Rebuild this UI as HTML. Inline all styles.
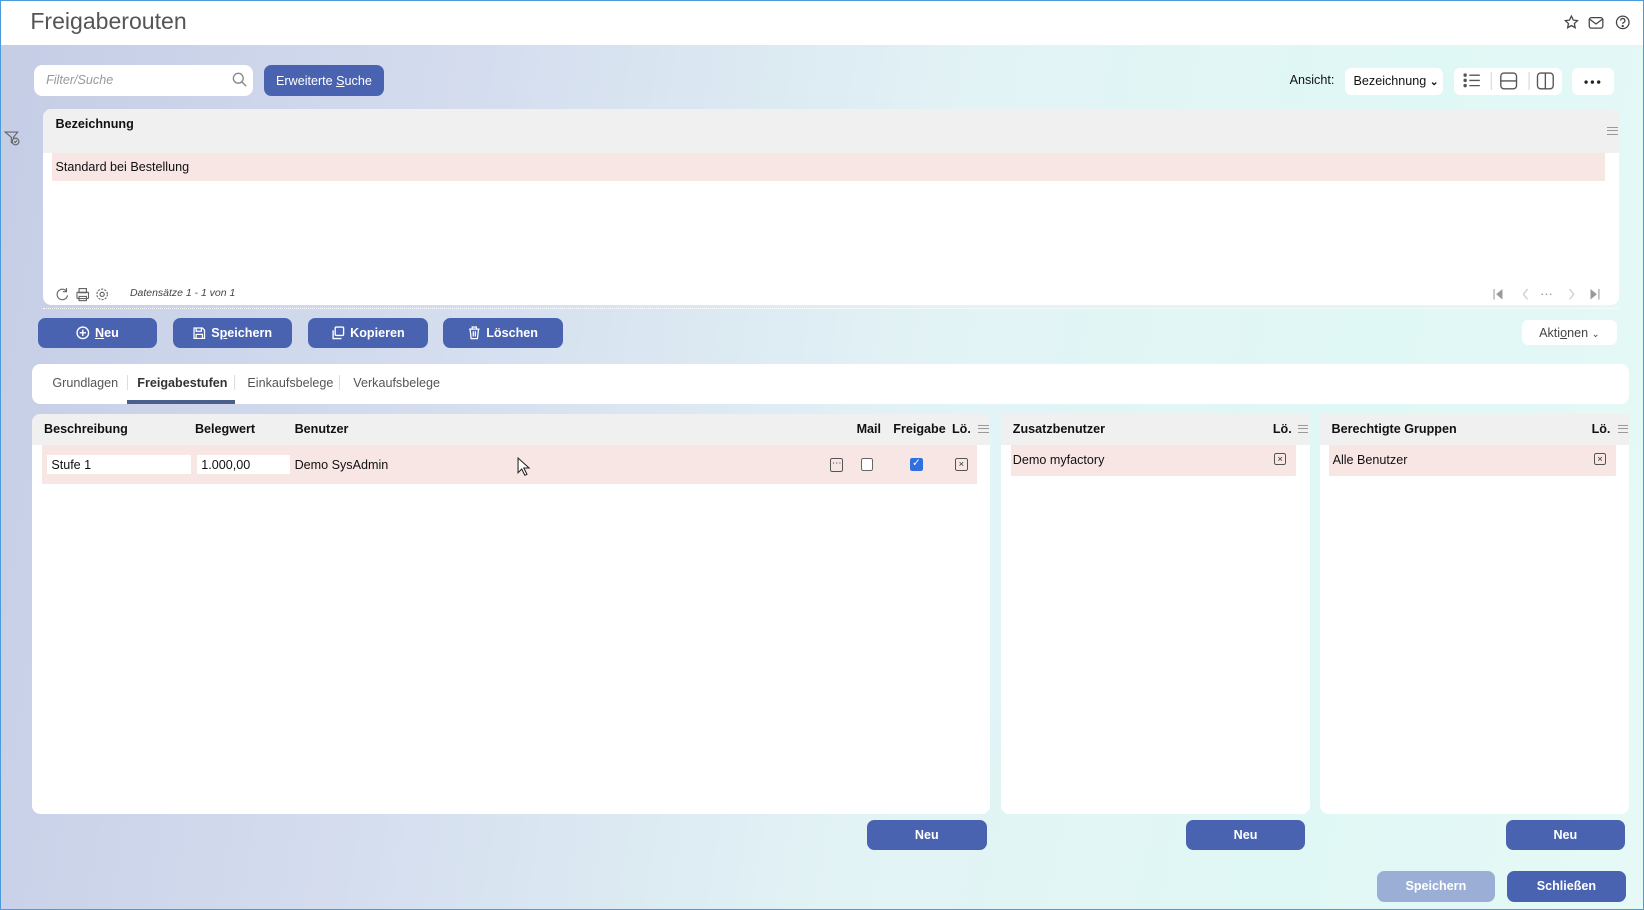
<!DOCTYPE html>
<html><head><meta charset="utf-8"><style>
*{box-sizing:border-box;margin:0;padding:0}
html,body{width:1644px;height:910px;overflow:hidden;background:#fff}
#w{zoom:1.0485;width:1568px;height:868px;position:relative;font-family:"Liberation Sans",sans-serif;font-size:12px;color:#111;
background:linear-gradient(100deg,#c5cde6 0%,#d3dbee 25%,#e2f3f5 55%,#e0f8f5 80%,#e6f9f7 100%);border:1.5px solid #4c9ad9;overflow:hidden}
.a{position:absolute}
.hdr{left:0;top:0;width:1568px;height:42px;background:#fff}
.btn{position:absolute;background:#4a63b0;color:#fff;border-radius:7px;font-size:12px;display:flex;align-items:center;justify-content:center;gap:5px;font-weight:bold}
.pan{position:absolute;background:#fff;border-radius:8px;overflow:hidden}
.gh{position:absolute;background:#f0f0f0;font-weight:bold;font-size:12px}
.pink{position:absolute;background:#f7e6e4}
.xb{position:absolute;width:12px;height:12px;border:1.3px solid #555;border-radius:2px;font-size:9px;line-height:9px;text-align:center;color:#333}
.ham{position:absolute;width:10px;height:8px;border-top:1px solid #999;border-bottom:1px solid #999}
.ham:after{content:"";position:absolute;left:0;right:0;top:2.5px;border-top:1px solid #999}
.tab{position:absolute;top:358px;color:#555;font-size:12px}
.sep{position:absolute;top:357px;width:1px;height:14px;background:#ddd}
</style></head><body><div id="w">
<div class="a hdr"></div>
<div class="a" style="left:28px;top:7px;font-size:22px;color:#555">Freigaberouten</div>
<svg class="a" style="left:1490px;top:12px" width="70" height="16" viewBox="0 0 70 16" fill="none" stroke="#444" stroke-width="1.2">
<path d="M8 2l1.8 3.8 4 .5-3 2.8.8 4L8 11l-3.6 2.1.8-4-3-2.8 4-.5z"/>
<rect x="25" y="3.5" width="13" height="10" rx="2"/><path d="M25.5 5l6 4.5 6-4.5"/>
<circle cx="57" cy="8" r="6"/><path d="M55 6.3a2 2 0 1 1 2.6 1.9c-.5.2-.6.6-.6 1.2"/><circle cx="57" cy="11.5" r=".5" fill="#444"/>
</svg>
<div class="a" style="left:31px;top:61px;width:209px;height:30px;background:#fff;border-radius:8px"></div>
<div class="a" style="left:43px;top:69px;color:#999;font-style:italic;font-size:12px">Filter/Suche</div>
<svg class="a" style="left:220px;top:68px" width="15" height="15" fill="none" stroke="#888" stroke-width="1.3"><circle cx="6" cy="6" r="4.7"/><path d="M9.5 9.5l4 4"/></svg>
<div class="btn" style="left:251px;top:61px;width:114px;height:30px;font-weight:normal"><span>Erweiterte <u>S</u>uche</span></div>
<div class="a" style="left:1229px;top:69px;font-size:12px">Ansicht:</div>
<div class="a" style="left:1282px;top:64px;width:93px;height:26px;background:#fff;border-radius:6px;padding:6px 0 0 8px;font-size:12px">Bezeichnung <span style="font-size:10px;font-weight:bold">⌄</span></div>
<div class="a" style="left:1386px;top:64px;width:103px;height:26px;background:#fff;border-radius:6px"></div>
<svg class="a" style="left:1393px;top:68px" width="92" height="18" fill="none" stroke="#555" stroke-width="1.3">
<circle cx="3" cy="3" r="1" fill="#555"/><circle cx="3" cy="8" r="1" fill="#555"/><circle cx="3" cy="13" r="1" fill="#555"/><path d="M7 3h10M7 8h10M7 13h10"/>
<path d="M28 0v17M64 0v17" stroke="#ddd"/>
<rect x="37" y="1" width="15" height="15" rx="3"/><path d="M37 8.5h15"/>
<rect x="72" y="1" width="15" height="15" rx="3"/><path d="M79.5 1v15"/>
</svg>
<div class="a" style="left:1498px;top:64px;width:40px;height:26px;background:#fff;border-radius:6px"></div>
<svg class="a" style="left:1510px;top:75px" width="16" height="4" fill="#222"><circle cx="2" cy="2" r="1.6"/><circle cx="8" cy="2" r="1.6"/><circle cx="14" cy="2" r="1.6"/></svg>
<svg class="a" style="left:3px;top:124px" width="16" height="14" fill="none" stroke="#666" stroke-width="1.1"><path d="M1 1h12l-4 5v6l-2-1V6z"/><circle cx="11" cy="10" r="3.2" fill="#c5cde6"/><path d="M9.6 10l1 1 1.8-2"/></svg>
<div class="pan" style="left:40px;top:103px;width:1503px;height:187px"></div>
<div class="gh" style="left:40px;top:103px;width:1503px;height:42px;border-radius:8px 8px 0 0;padding:8px 0 0 12px">Bezeichnung</div>
<div class="ham" style="left:1532px;top:120px"></div>
<div class="pink" style="left:49px;top:145px;width:1481px;height:27px;padding:7px 0 0 3px">Standard bei Bestellung</div>
<svg class="a" style="left:52px;top:273px" width="52" height="14" fill="none" stroke="#666" stroke-width="1.1">
<path d="M10 4a5 5 0 1 0 1 4M10 1v3.5H6.5"/>
<rect x="20" y="5" width="11" height="6" rx="1"/><rect x="22" y="1.5" width="7" height="4"/><rect x="22" y="9" width="7" height="4"/>
<circle cx="44" cy="7" r="2"/><circle cx="44" cy="7" r="5" stroke-dasharray="2 1.2"/>
</svg>
<div class="a" style="left:123px;top:274px;font-size:10px;font-style:italic;color:#444">Datensätze 1 - 1 von 1</div>
<svg class="a" style="left:1423px;top:274px" width="105" height="12" fill="#999" stroke="#aaa" stroke-width="1.2">
<path d="M1 1v10" /><path d="M9 1L3 6l6 5z" stroke="none"/>
<path d="M33 1l-4 5 4 5" fill="none" stroke="#ccc"/>
<circle cx="47" cy="6" r=".8" stroke="none"/><circle cx="51" cy="6" r=".8" stroke="none"/><circle cx="55" cy="6" r=".8" stroke="none"/>
<path d="M73 1l4 5-4 5" fill="none" stroke="#ccc"/>
<path d="M93 1l6 5-6 5z" stroke="none"/><path d="M101 1v10"/>
</svg>
<div class="a" style="left:40px;top:293px;width:1503px;border-top:1px dotted #fff"></div>
<div class="btn" style="left:35px;top:302px;width:114px;height:29px"><svg width="13" height="13" fill="none" stroke="#fff" stroke-width="1.3"><circle cx="6.5" cy="6.5" r="5.5"/><path d="M6.5 3.5v6M3.5 6.5h6"/></svg><span><u>N</u>eu</span></div>
<div class="btn" style="left:164px;top:302px;width:114px;height:29px"><svg width="12" height="12" fill="none" stroke="#fff" stroke-width="1.2"><path d="M1 1h8l2 2v8H1z M3 1v3h5V1M3 11V7h6v4"/></svg><span>S<u>p</u>eichern</span></div>
<div class="btn" style="left:293px;top:302px;width:114px;height:29px"><svg width="13" height="13" fill="none" stroke="#fff" stroke-width="1.3"><rect x="4" y="1" width="8" height="8" rx="1"/><path d="M2 4v8h8"/></svg><span>Kopieren</span></div>
<div class="btn" style="left:422px;top:302px;width:114px;height:29px"><svg width="12" height="13" fill="none" stroke="#fff" stroke-width="1.2"><path d="M1 3h10M4 3V1h4v2M2 3l1 9h6l1-9M5 5v5M7 5v5"/></svg><span>Löschen</span></div>
<div class="a" style="left:1451px;top:304px;width:90px;height:24px;background:#fff;border-radius:6px;color:#444;padding:6px 0 0 16px">Akti<u>o</u>nen <span style="font-size:9px">⌄</span></div>
<div class="pan" style="left:30px;top:346px;width:1523px;height:38px"></div>
<div class="tab" style="left:49px">Grundlagen</div><div class="sep" style="left:120px"></div>
<div class="tab" style="left:130px;font-weight:bold;color:#333">Freigabestufen</div><div class="sep" style="left:222px"></div>
<div class="a" style="left:120px;top:381px;width:103px;height:3px;background:#4a5f8c"></div>
<div class="tab" style="left:235px">Einkaufsbelege</div><div class="sep" style="left:322px"></div>
<div class="tab" style="left:336px">Verkaufsbelege</div>
<div class="pan" style="left:30px;top:394px;width:913px;height:381px"></div>
<div class="gh" style="left:30px;top:394px;width:913px;height:29px;border-radius:8px 8px 0 0"></div>
<div class="a" style="left:41px;top:402px;font-weight:bold">Beschreibung</div>
<div class="a" style="left:185px;top:402px;font-weight:bold">Belegwert</div>
<div class="a" style="left:280px;top:402px;font-weight:bold">Benutzer</div>
<div class="a" style="left:816px;top:402px;font-weight:bold">Mail</div>
<div class="a" style="left:851px;top:402px;font-weight:bold">Freigabe</div>
<div class="a" style="left:907px;top:402px;font-weight:bold">Lö.</div>
<div class="ham" style="left:932px;top:404px"></div>
<div class="pink" style="left:39px;top:423px;width:892px;height:38px"></div>
<div class="a" style="left:44px;top:433px;width:137px;height:18px;background:#fff;padding:3px 0 0 4px">Stufe 1</div>
<div class="a" style="left:187px;top:433px;width:89px;height:18px;background:#fff;padding:3px 0 0 4px">1.000,00</div>
<div class="a" style="left:280px;top:436px">Demo SysAdmin</div>
<svg class="a" style="left:492px;top:435px" width="14" height="20"><path d="M1 1v14l3.5-3.5 3 6 2-1-3-6h5z" fill="#fff" stroke="#222" stroke-width="1"/></svg>
<div class="xb" style="left:791px;top:436px;height:13px;line-height:7px">⋯</div>
<div class="a" style="left:820px;top:436px;width:12px;height:12px;border:1px solid #666;border-radius:2px;background:#fff"></div>
<div class="a" style="left:867px;top:436px;width:12px;height:12px;border-radius:2px;background:#2f6fe0;color:#fff;font-size:10px;text-align:center;line-height:12px">✓</div>
<div class="xb" style="left:910px;top:436px">×</div>
<div class="pan" style="left:954px;top:394px;width:294px;height:381px"></div>
<div class="gh" style="left:954px;top:394px;width:294px;height:29px;padding:8px 0 0 11px">Zusatzbenutzer</div>
<div class="a" style="left:1213px;top:402px;font-weight:bold">Lö.</div><div class="ham" style="left:1237px;top:404px"></div>
<div class="pink" style="left:963px;top:423px;width:272px;height:30px;padding:8px 0 0 2px">Demo myfactory</div>
<div class="xb" style="left:1214px;top:431px">×</div>
<div class="pan" style="left:1258px;top:394px;width:295px;height:381px"></div>
<div class="gh" style="left:1258px;top:394px;width:295px;height:29px;padding:8px 0 0 11px">Berechtigte Gruppen</div>
<div class="a" style="left:1517px;top:402px;font-weight:bold">Lö.</div><div class="ham" style="left:1542px;top:404px"></div>
<div class="pink" style="left:1267px;top:423px;width:273px;height:30px;padding:8px 0 0 3px">Alle Benutzer</div>
<div class="xb" style="left:1519px;top:431px">×</div>
<div class="btn" style="left:826px;top:781px;width:114px;height:29px">Neu</div>
<div class="btn" style="left:1130px;top:781px;width:114px;height:29px">Neu</div>
<div class="btn" style="left:1435px;top:781px;width:114px;height:29px">Neu</div>
<div class="btn" style="left:1312px;top:830px;width:113px;height:29px;background:#9aaed6">Speichern</div>
<div class="btn" style="left:1436px;top:830px;width:114px;height:29px">Schließen</div>
</div></body></html>
